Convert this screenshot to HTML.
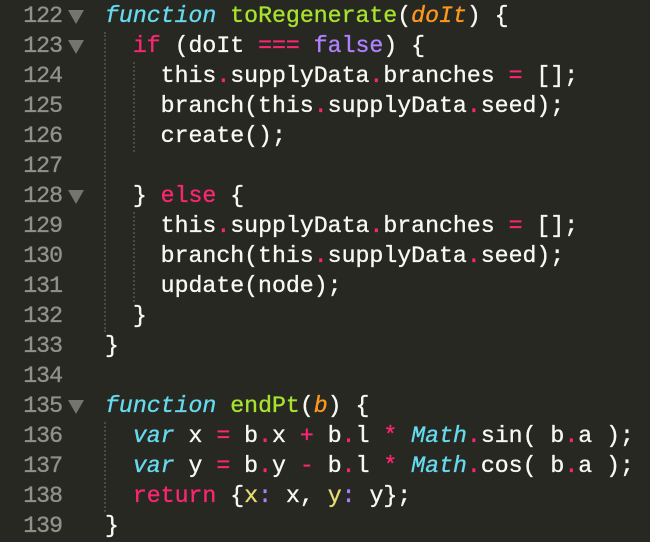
<!DOCTYPE html>
<html><head><style>
html,body{margin:0;padding:0;background:#272822;width:650px;height:542px;overflow:hidden}
.w{position:absolute;left:0;top:1px;font-family:"Liberation Mono",monospace;font-size:23.2px;line-height:30px;color:#f8f8f2;-webkit-text-stroke:0.35px currentColor}
.l{height:30px;white-space:pre;position:relative}
.n{position:absolute;left:0;width:62px;text-align:right;color:#90918b;letter-spacing:-1px}
.a{position:absolute;left:68px;top:9px;width:0;height:0;border-left:8px solid transparent;border-right:8px solid transparent;border-top:14px solid #75756f}
.c{position:absolute;left:105px}
.k{color:#66d9ef;font-style:italic}
.g{color:#a6e22e}
.p{color:#fd971f;font-style:italic}
.r{color:#f92672}
.v{color:#ae81ff}
.y{color:#e6db74}
.gd{position:absolute;width:0;border-left:2px dotted #4a4b44}
</style></head><body>
<div class="gd" style="left:104px;top:32px;height:300px"></div>
<div class="gd" style="left:133px;top:62px;height:90px"></div>
<div class="gd" style="left:133px;top:212px;height:90px"></div>
<div class="gd" style="left:104px;top:422px;height:90px"></div>
<div class="w">
<div class="l"><span class="n">122</span><span class="a"></span><span class="c"><span class="k">function</span> <span class="g">toRegenerate</span>(<span class="p">doIt</span>) {</span></div>
<div class="l"><span class="n">123</span><span class="a"></span><span class="c">  <span class="r">if</span> (doIt <span class="r">===</span> <span class="v">false</span>) {</span></div>
<div class="l"><span class="n">124</span><span class="c">    this<span class="r">.</span>supplyData<span class="r">.</span>branches <span class="r">=</span> [];</span></div>
<div class="l"><span class="n">125</span><span class="c">    branch(this<span class="r">.</span>supplyData<span class="r">.</span>seed);</span></div>
<div class="l"><span class="n">126</span><span class="c">    create();</span></div>
<div class="l"><span class="n">127</span><span class="c"></span></div>
<div class="l"><span class="n">128</span><span class="a"></span><span class="c">  } <span class="r">else</span> {</span></div>
<div class="l"><span class="n">129</span><span class="c">    this<span class="r">.</span>supplyData<span class="r">.</span>branches <span class="r">=</span> [];</span></div>
<div class="l"><span class="n">130</span><span class="c">    branch(this<span class="r">.</span>supplyData<span class="r">.</span>seed);</span></div>
<div class="l"><span class="n">131</span><span class="c">    update(node);</span></div>
<div class="l"><span class="n">132</span><span class="c">  }</span></div>
<div class="l"><span class="n">133</span><span class="c">}</span></div>
<div class="l"><span class="n">134</span><span class="c"></span></div>
<div class="l"><span class="n">135</span><span class="a"></span><span class="c"><span class="k">function</span> <span class="g">endPt</span>(<span class="p">b</span>) {</span></div>
<div class="l"><span class="n">136</span><span class="c">  <span class="k">var</span> x <span class="r">=</span> b<span class="r">.</span>x <span class="r">+</span> b<span class="r">.</span>l <span class="r">*</span> <span class="k">Math</span><span class="r">.</span>sin( b<span class="r">.</span>a );</span></div>
<div class="l"><span class="n">137</span><span class="c">  <span class="k">var</span> y <span class="r">=</span> b<span class="r">.</span>y <span class="r">-</span> b<span class="r">.</span>l <span class="r">*</span> <span class="k">Math</span><span class="r">.</span>cos( b<span class="r">.</span>a );</span></div>
<div class="l"><span class="n">138</span><span class="c">  <span class="r">return</span> {<span class="y">x</span><span class="v">:</span> x, <span class="y">y</span><span class="v">:</span> y};</span></div>
<div class="l"><span class="n">139</span><span class="c">}</span></div>
</div>
</body></html>
